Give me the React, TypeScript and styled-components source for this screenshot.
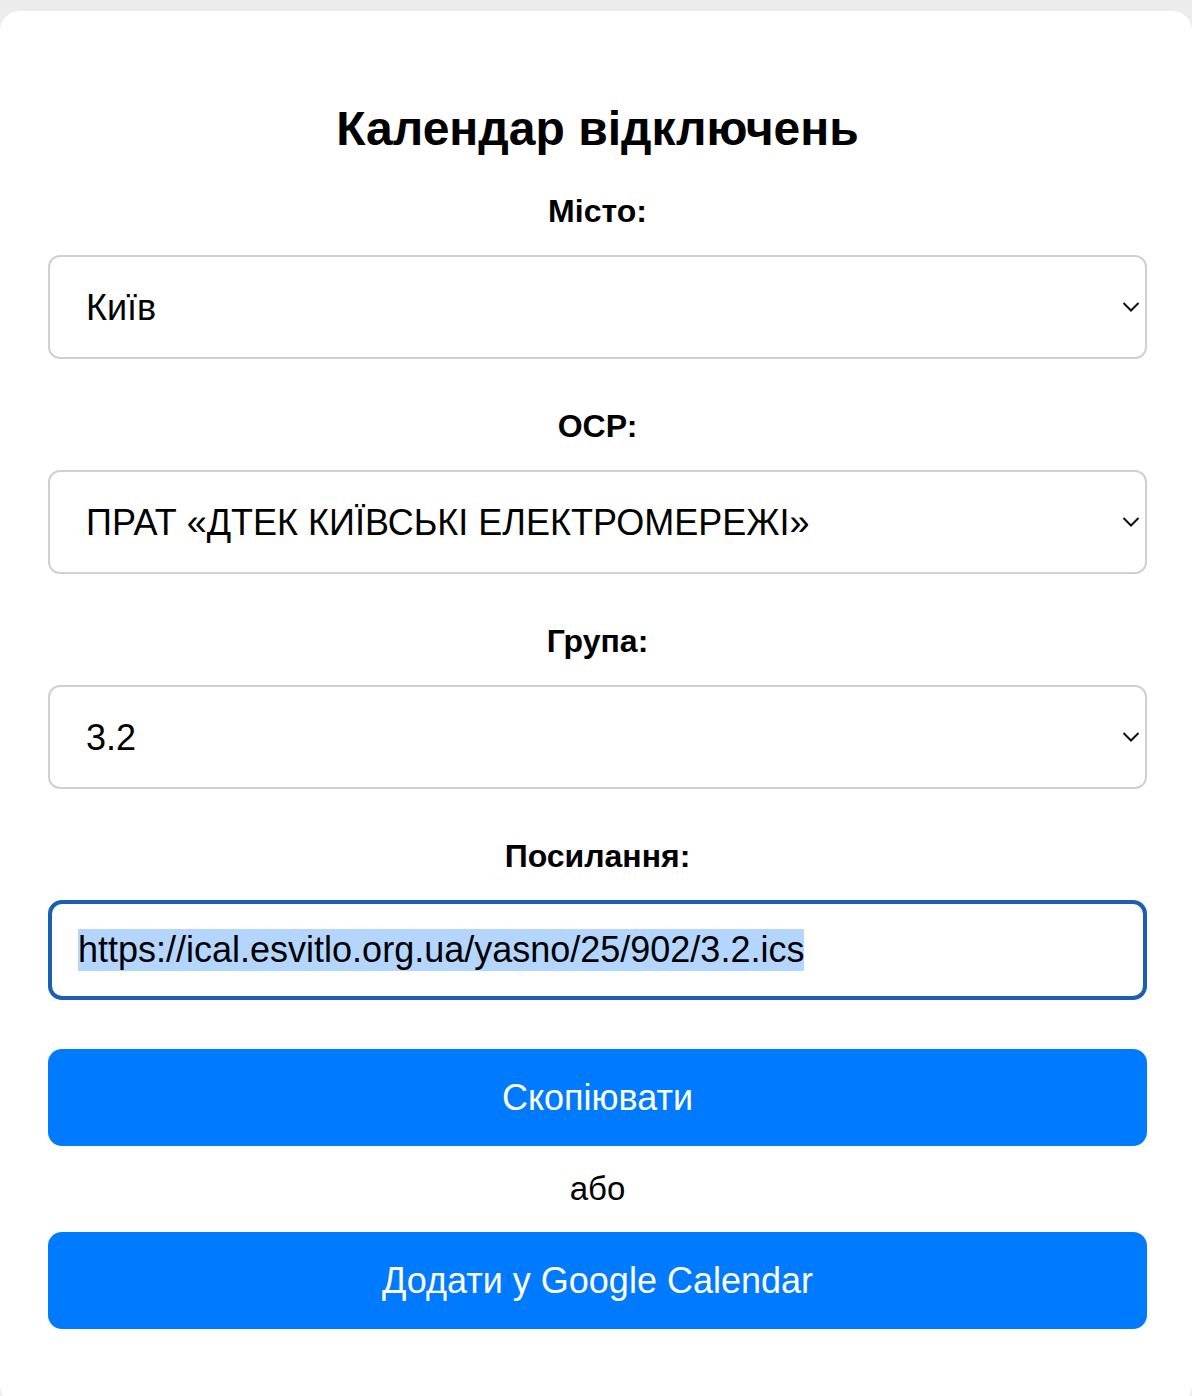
import { useEffect, useRef } from 'react';
import styled, { createGlobalStyle } from 'styled-components';

const GlobalStyle = createGlobalStyle`
    html, body {
        margin: 0;
        padding: 0;
        background-color: #ececec;
        font-family: "Liberation Sans", Arial, sans-serif;
    }
    body {
        padding-top: 11px;
    }
`;

interface FieldOption {
    label: string;
    value: string;
}

const cities: FieldOption[] = [{ label: 'Київ', value: 'kyiv' }];
const operators: FieldOption[] = [{ label: 'ПРАТ «ДТЕК КИЇВСЬКІ ЕЛЕКТРОМЕРЕЖІ»', value: 'yasno' }];
const groups: FieldOption[] = [{ label: '3.2', value: '3.2' }];

const ICAL_URL = 'https://ical.esvitlo.org.ua/yasno/25/902/3.2.ics';

const Chevron = () => (
    <ChevronIcon width="18" height="12" viewBox="0 0 18 12">
        <path d="M1.5 2 L9 9.5 L16.5 2" fill="none" stroke="#111" strokeWidth="2" />
    </ChevronIcon>
);

const SelectField = ({ label, options }: { label: string; options: FieldOption[] }) => (
    <Field>
        <Label>{label}</Label>
        <SelectWrapper>
            <Select defaultValue={options[0].value}>
                {options.map((o) => (
                    <option key={o.value} value={o.value}>
                        {o.label}
                    </option>
                ))}
            </Select>
            <Chevron />
        </SelectWrapper>
    </Field>
);

const App = () => {
    const linkRef = useRef<HTMLInputElement>(null);

    useEffect(() => {
        linkRef.current?.focus();
        linkRef.current?.select();
    }, []);

    return (
        <>
            <GlobalStyle />
            <Card>
                <Title>Календар відключень</Title>
                <SelectField label="Місто:" options={cities} />
                <SelectField label="ОСР:" options={operators} />
                <SelectField label="Група:" options={groups} />
                <Field>
                    <Label>Посилання:</Label>
                    <LinkInput ref={linkRef} readOnly value={ICAL_URL} />
                </Field>
                <Button>Скопіювати</Button>
                <Or>або</Or>
                <Button>Додати у Google Calendar</Button>
            </Card>
        </>
    );
};

const Card = styled.div`
    display: flex;
    flex-direction: column;
    background-color: white;
    border-radius: 20px;
    padding: 0 45px 76px 48px;
    min-height: 1300px;
    box-sizing: border-box;
`;

const Title = styled.h2`
    font-size: 48px;
    font-weight: bold;
    text-align: center;
    color: #000;
    margin: 90px 0 37px;
    line-height: 55px;
`;

const Field = styled.div`
    display: flex;
    flex-direction: column;
    margin-bottom: 49px;
`;

const Label = styled.label`
    font-size: 32px;
    font-weight: bold;
    text-align: center;
    color: #000;
    line-height: 37px;
    margin-bottom: 25px;
`;

const SelectWrapper = styled.div`
    position: relative;
`;

const Select = styled.select`
    appearance: none;
    width: 100%;
    height: 104px;
    box-sizing: border-box;
    border: 2px solid #d0d0d0;
    border-radius: 12px;
    background-color: white;
    padding: 0 36px;
    font-family: "Liberation Sans", Arial, sans-serif;
    font-size: 36px;
    color: #000;
    outline: none;
`;

const ChevronIcon = styled.svg`
    position: absolute;
    right: 7px;
    top: 46px;
    pointer-events: none;
`;

const LinkInput = styled.input`
    width: 100%;
    height: 100px;
    box-sizing: border-box;
    border: 4px solid #1a5fb4;
    border-radius: 14px;
    padding: 0 26px;
    font-family: "Liberation Sans", Arial, sans-serif;
    font-size: 36px;
    color: #000;
    outline: none;
    &::selection {
        background-color: #b4d5fe;
        color: #000;
    }
`;

const Button = styled.button`
    height: 97px;
    border: none;
    border-radius: 14px;
    background-color: #007bff;
    color: white;
    font-family: "Liberation Sans", Arial, sans-serif;
    font-size: 36px;
    cursor: pointer;
`;

const Or = styled.div`
    font-size: 33px;
    text-align: center;
    color: #000;
    line-height: 37px;
    margin: 24px 0 25px;
`;

export default App;
